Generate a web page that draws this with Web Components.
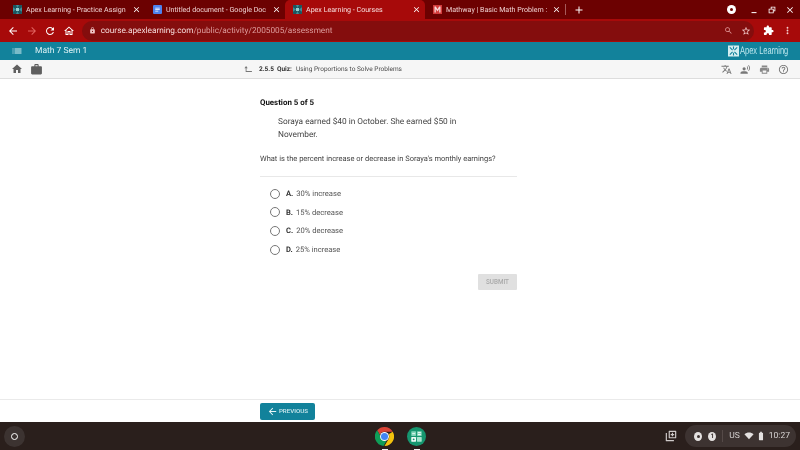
<!DOCTYPE html>
<html>
<head>
<meta charset="utf-8">
<title>Apex Learning - Courses</title>
<style>
  html, body { margin: 0; height: 100%; overflow: hidden; background: #fff; }
  body { font-family: Roboto, "Liberation Sans", sans-serif; display: flex; flex-direction: column; height: 450px; text-rendering: geometricPrecision; filter: blur(.45px); }
</style>
</head>
<body>
<browser-tabs>
  <browser-tab kind="apex" title="Apex Learning - Practice Assign"></browser-tab>
  <browser-tab kind="docs" title="Untitled document - Google Doc"></browser-tab>
  <browser-tab kind="apex" title="Apex Learning - Courses" active></browser-tab>
  <browser-tab kind="mathway" title="Mathway | Basic Math Problem :"></browser-tab>
</browser-tabs>
<browser-toolbar></browser-toolbar>
<app-header></app-header>
<app-subnav></app-subnav>
<quiz-page>
  <answer-choice letter="A." text="30% increase"></answer-choice>
  <answer-choice letter="B." text="15% decrease"></answer-choice>
  <answer-choice letter="C." text="20% decrease"></answer-choice>
  <answer-choice letter="D." text="25% increase"></answer-choice>
</quiz-page>
<app-footer></app-footer>
<os-shelf></os-shelf>

<script>
const ICONS = {
  back: 'M20 11H7.83l5.59-5.59L12 4l-8 8 8 8 1.41-1.41L7.83 13H20v-2z',
  forward: 'M12 4l-1.41 1.41L16.17 11H4v2h12.17l-5.58 5.59L12 20l8-8z',
  refresh: 'M17.65 6.35C16.2 4.9 14.21 4 12 4c-4.42 0-7.99 3.58-7.99 8s3.57 8 7.99 8c3.73 0 6.84-2.55 7.73-6h-2.08c-.82 2.33-3.04 4-5.65 4-3.31 0-6-2.69-6-6s2.69-6 6-6c1.66 0 3.14.69 4.22 1.78L13 11h7V4l-2.35 2.35z',
  homeo: 'M12 5.69l5 4.5V18h-2v-6H9v6H7v-7.81l5-4.5M12 3L2 12h3v8h6v-6h2v6h6v-8h3L12 3z',
  home: 'M10 20v-6h4v6h5v-8h3L12 3 2 12h3v8z',
  work: 'M20 6h-4V4c0-1.11-.89-2-2-2h-4c-1.11 0-2 .89-2 2v2H4c-1.11 0-1.99.89-1.99 2L2 19c0 1.11.89 2 2 2h16c1.11 0 2-.89 2-2V8c0-1.11-.89-2-2-2zm-6 0h-4V4h4v2z',
  print: 'M19 8H5c-1.66 0-3 1.34-3 3v6h4v4h12v-4h4v-6c0-1.66-1.34-3-3-3zm-3 11H8v-5h8v5zm3-7c-.55 0-1-.45-1-1s.45-1 1-1 1 .45 1 1-.45 1-1 1zm-1-9H6v4h12V3z',
  help: 'M11 18h2v-2h-2v2zm1-16C6.48 2 2 6.48 2 12s4.48 10 10 10 10-4.48 10-10S17.52 2 12 2zm0 18c-4.41 0-8-3.59-8-8s3.59-8 8-8 8 3.59 8 8-3.59 8-8 8zm0-14c-2.21 0-4 1.79-4 4h2c0-1.1.9-2 2-2s2 .9 2 2c0 2-3 1.75-3 5h2c0-2.25 3-2.5 3-5 0-2.21-1.79-4-4-4z',
  translate: 'M12.87 15.07l-2.54-2.51.03-.03c1.74-1.94 2.98-4.17 3.71-6.53H17V4h-7V2H8v2H1v1.99h11.17C11.5 7.92 10.44 9.75 9 11.35 8.07 10.32 7.3 9.19 6.69 8h-2c.73 1.63 1.73 3.17 2.98 4.56l-5.09 5.02L4 19l5-5 3.11 3.11.76-2.04zM18.5 10h-2L12 22h2l1.12-3h4.75L21 22h2l-4.5-12zm-2.62 7l1.62-4.33L19.12 17h-3.24z',
  extension: 'M20.5 11H19V7c0-1.1-.9-2-2-2h-4V3.5C13 2.12 11.88 1 10.5 1S8 2.12 8 3.5V5H4c-1.1 0-1.99.9-1.99 2v3.8H3.5c1.49 0 2.7 1.21 2.7 2.7s-1.21 2.7-2.7 2.7H2V20c0 1.1.9 2 2 2h3.8v-1.5c0-1.49 1.21-2.7 2.7-2.7 1.49 0 2.7 1.21 2.7 2.7V22H17c1.1 0 2-.9 2-2v-4h1.5c1.38 0 2.5-1.12 2.5-2.5S21.88 11 20.5 11z',
  lock: 'M18 8h-1V6c0-2.76-2.24-5-5-5S7 3.24 7 6v2H6c-1.1 0-2 .9-2 2v10c0 1.1.9 2 2 2h12c1.1 0 2-.9 2-2V10c0-1.1-.9-2-2-2zm-6 9c-1.1 0-2-.9-2-2s.9-2 2-2 2 .9 2 2-.9 2-2 2zm3.1-9H8.9V6c0-1.71 1.39-3.1 3.1-3.1 1.71 0 3.1 1.39 3.1 3.1v2z',
  star: 'M22 9.24l-7.19-.62L12 2 9.19 8.63 2 9.24l5.46 4.73L5.82 21 12 17.27 18.18 21l-1.63-7.03L22 9.24zM12 15.4l-3.76 2.27 1-4.28-3.32-2.88 4.38-.38L12 6.1l1.71 4.04 4.38.38-3.32 2.88 1 4.28L12 15.4z',
  search: 'M15.5 14h-.79l-.28-.27C15.41 12.59 16 11.11 16 9.5 16 5.91 13.09 3 9.5 3S3 5.91 3 9.5 5.91 16 9.5 16c1.61 0 3.09-.59 4.23-1.57l.27.28v.79l5 4.99L20.49 19l-4.99-5zm-6 0C7.01 14 5 11.99 5 9.5S7.01 5 9.5 5 14 7.01 14 9.5 11.99 14 9.5 14z',
  list: 'M3 13h2v-2H3v2zm0 4h2v-2H3v2zm0-8h2V7H3v2zm4 4h14v-2H7v2zm0 4h14v-2H7v2zM7 7v2h14V7H7z',
  close: 'M19 6.41L17.59 5 12 10.59 6.41 5 5 6.41 10.59 12 5 17.59 6.41 19 12 13.41 17.59 19 19 17.59 13.41 12z',
  plus: 'M19 13h-6v6h-2v-6H5v-2h6V5h2v6h6v2z',
  dots: 'M12 8a2 2 0 1 0 0-4 2 2 0 0 0 0 4zm0 2a2 2 0 1 0 0 4 2 2 0 0 0 0-4zm0 6a2 2 0 1 0 0 4 2 2 0 0 0 0-4z',
  upback: 'M5 5L1 10h3v9h15v-2H6v-7h3z',
  voice: 'M9 7a3.500 3.500 0 1 1 0 7 3.500 3.500 0 0 1 0-7zM1 21v-1.500C1 17 6 16 9 16s8 1 8 3.500V21zM16 5l-1.200 1.200c1.300 1.500 1.300 3.600 0 5.100L16 12.500c2-2 2-5.500 0-7.500zM19 2l-1.200 1.200c2.900 3 2.900 8.100 0 11.100L19 15.500c3.800-3.700 3.800-9.800 0-13.500z',
  wifi: 'M12 20L1 7.500C4 5 8 3.500 12 3.500s8 1.500 11 4z',
  battery: 'M15.700 4H14V2h-4v2H8.300C7.600 4 7 4.600 7 5.300v15.300C7 21.400 7.600 22 8.300 22h7.300c.8 0 1.300-.6 1.300-1.300V5.300C17 4.600 16.400 4 15.700 4z',
  minimize: 'M6 17h12v2.500H6z',
  restore: 'M9 4h11v11h-4v5H4V9h5zm2 5h5v4h2V6h-7zM6 11v7h8v-7z',
  shelfadd: 'M9 3h11a1 1 0 0 1 1 1v11a1 1 0 0 1-1 1H9a1 1 0 0 1-1-1V4a1 1 0 0 1 1-1zm1 2v9h9V5zm3.500 1.500h2v2h2v2h-2v2h-2v-2h-2v-2h2zM3 7h2v12h12v2H4a1 1 0 0 1-1-1z'
};

class UiIcon extends HTMLElement {
  connectedCallback() {
    const size = this.getAttribute('size') || 12;
    const color = this.getAttribute('color') || 'currentColor';
    this.attachShadow({mode: 'open'}).innerHTML = `
      <style>:host{display:inline-flex;flex:none;width:${size}px;height:${size}px} svg{display:block;width:100%;height:100%}</style>
      <svg viewBox="0 0 24 24" fill="${color}"><path d="${ICONS[this.getAttribute('name')]}"/></svg>`;
  }
}
customElements.define('ui-icon', UiIcon);

const FAVICONS = {
  apex: `<rect width="12" height="12" fill="#3d8f9a"/><path d="M0 0h4l2 4 2-4h4v3L8 6l4 3v3H8L6 8l-2 4H0V9l4-3-4-3z" fill="#1d5660"/><rect x="4" y="4" width="4" height="4" fill="#9accce"/>`,
  docs: `<rect width="12" height="12" rx="1.500" fill="#4e82ee"/><path d="M3 3.500h6v1H3zM3 5.500h6v1H3zM3 7.500h4v1H3z" fill="#fff"/>`,
  mathway: `<rect width="12" height="12" fill="#d23b3b"/><path d="M2 10V2h1.800L6 5.500 8.200 2H10v8H8.300V5.200L6 8.500 3.700 5.200V10z" fill="#f7d9d9"/>`
};

class BrowserTab extends HTMLElement {
  constructor() {
    super();
    this.attachShadow({mode: 'open'});
  }
  connectedCallback() {
    this.shadowRoot.innerHTML = `
      <style>
        :host { display: flex; align-items: center; width: 140px; height: 19px; box-sizing: border-box; padding: 0 4px 0 8px; color: #f0d2d2; font-size: 7.100px; }
        :host([active]) { background: #a70a0a; border-radius: 5px 5px 0 0; color: #f8dede; }
        svg { width: 9px; height: 9px; flex: none; }
        .title { flex: 1; margin-left: 4px; white-space: nowrap; overflow: hidden; }
        ui-icon { margin-left: 2px; color: #fff; }
      </style>
      <svg viewBox="0 0 12 12">${FAVICONS[this.getAttribute('kind')]}</svg>
      <span class="title">${this.getAttribute('title')}</span>
      <ui-icon name="close" size="9"></ui-icon>`;
  }
}
customElements.define('browser-tab', BrowserTab);

customElements.define('browser-tabs', class extends HTMLElement {
  constructor() {
    super();
    this.attachShadow({mode: 'open'}).innerHTML = `
      <style>
        :host { display: flex; align-items: center; height: 19px; background: #6c0101; color: #fff; flex: none; padding-left: 5px; }
        .sep { width: 1px; height: 11px; background: #a65a5a; }
        .plus { margin-left: 7px; }
        .win { margin-left: auto; display: flex; align-items: center; gap: 8px; padding-right: 5px; }
        .profile { width: 9px; height: 9px; border-radius: 50%; background: #fff; display: flex; align-items: center; justify-content: center; margin-right: 5px; }
        .profile i { width: 3px; height: 3px; border-radius: 50%; background: #6c0101; }
      </style>
      <slot></slot>
      <span class="sep"></span>
      <ui-icon class="plus" name="plus" size="12"></ui-icon>
      <div class="win">
        <span class="profile"><i></i></span>
        <ui-icon name="minimize" size="10"></ui-icon>
        <ui-icon name="restore" size="10"></ui-icon>
        <ui-icon name="close" size="10"></ui-icon>
      </div>`;
  }
});

customElements.define('browser-toolbar', class extends HTMLElement {
  constructor() {
    super();
    this.attachShadow({mode: 'open'}).innerHTML = `
      <style>
        :host { display: flex; align-items: center; height: 23px; background: #a70a0a; color: #fff; flex: none; padding-left: 7px; box-sizing: border-box; }
        .nav { display: flex; gap: 6.600px; align-items: center; }
        .omni { flex: 1; height: 20px; margin-left: 7px; background: #840d0d; border-radius: 10px; display: flex; align-items: center; padding: 0 3px 0 7px; font-size: 8.250px; color: #dd9c9c; white-space: nowrap; }
        .omni b { font-weight: 400; color: #f6dcdc; }
        .omni > span:first-of-type { margin-left: 5px; }
        .omni .right { margin-left: auto; display: flex; gap: 8px; align-items: center; }
        .tail { display: flex; align-items: center; gap: 8px; padding: 0 7px 0 9px; }
      </style>
      <div class="nav">
        <ui-icon name="back" size="12"></ui-icon>
        <ui-icon name="forward" size="12" color="#e0625f"></ui-icon>
        <ui-icon name="refresh" size="12"></ui-icon>
        <ui-icon name="homeo" size="12"></ui-icon>
      </div>
      <div class="omni">
        <ui-icon name="lock" size="7" color="#f0c8c8"></ui-icon>
        <span><b>course.apexlearning.com</b>/public/activity/2005005/assessment</span>
        <span class="right">
          <ui-icon name="search" size="9" color="#e39a9a"></ui-icon>
          <ui-icon name="star" size="10" color="#f5d0d0"></ui-icon>
        </span>
      </div>
      <div class="tail">
        <ui-icon name="extension" size="11"></ui-icon>
        <ui-icon name="dots" size="11" color="#f5d0d0"></ui-icon>
      </div>`;
  }
});

customElements.define('app-header', class extends HTMLElement {
  constructor() {
    super();
    this.attachShadow({mode: 'open'}).innerHTML = `
      <style>
        :host { display: flex; align-items: center; height: 18px; background: #12829b; color: #dff3f5; flex: none; padding: 0 12px 0 11px; box-sizing: border-box; font-size: 8.500px; }
        .name { margin-left: 12px; }
        .logo { margin-left: auto; display: flex; align-items: center; gap: 1px; font: 11px "Liberation Sans", sans-serif; color: #bfe8ee; }
        .logo span { display: inline-block; width: 48px; white-space: nowrap; }
        .logo span i { display: inline-block; font-style: normal; transform: scaleX(.68); transform-origin: left center; }
        svg { width: 11px; height: 12px; }
      </style>
      <ui-icon name="list" size="12"></ui-icon>
      <span class="name">Math 7 Sem 1</span>
      <div class="logo">
        <svg viewBox="0 0 12 12"><rect width="12" height="12" fill="#d5eef0"/><path d="M2 2l3 3M10 2L7 5M2 10l3-3M10 10L7 7M6 1v3M6 8v3" stroke="#12829b" stroke-width="1.200"/></svg>
        <span><i>Apex Learning</i></span>
      </div>`;
  }
});

customElements.define('app-subnav', class extends HTMLElement {
  constructor() {
    super();
    this.attachShadow({mode: 'open'}).innerHTML = `
      <style>
        :host { display: flex; align-items: center; height: 19px; background: #f6f6f6; border-bottom: 1px solid #ddd; box-sizing: border-box; color: #5f5f5f; flex: none; font-size: 6.500px; padding: 0 11px; }
        .left { display: flex; gap: 7px; width: 233px; }
        .crumb { display: flex; align-items: center; color: #4a4a4a; }
        .crumb b { margin-left: 5px; color: #333; }
        .crumb span { margin-left: 4px; white-space: nowrap; }
        .tools { margin-left: auto; display: flex; gap: 8px; align-items: center; }
      </style>
      <div class="left">
        <ui-icon name="home" size="12"></ui-icon>
        <ui-icon name="work" size="13"></ui-icon>
      </div>
      <div class="crumb">
        <ui-icon name="upback" size="10" color="#777"></ui-icon>
        <b>2.5.5</b><b style="margin-left:3px">Quiz:</b>
        <span>Using Proportions to Solve Problems</span>
      </div>
      <div class="tools">
        <ui-icon name="translate" size="11" color="#777"></ui-icon>
        <ui-icon name="voice" size="11" color="#777"></ui-icon>
        <ui-icon name="print" size="11" color="#888"></ui-icon>
        <ui-icon name="help" size="11" color="#777"></ui-icon>
      </div>`;
  }
});

customElements.define('quiz-page', class extends HTMLElement {
  constructor() {
    super();
    this.attachShadow({mode: 'open'}).innerHTML = `
      <style>
        :host { display: block; flex: 1; background: #fff; padding: 19px 283px 0 260px; color: #444; }
        h2 { margin: 0; font-size: 7.900px; line-height: 10px; color: #111; font-weight: 700; }
        .stem { margin: 8px 0 0 18px; font-size: 8.300px; line-height: 13px; color: #444; width: 190px; }
        .ask { margin: 11px 0 0; font-size: 7.500px; line-height: 11px; white-space: nowrap; color: #444; }
        hr { border: 0; border-top: 1px solid #e8e8e8; margin: 12px 0 0; }
        .choices { margin-top: 7.500px; }
        .actions { display: flex; justify-content: flex-end; margin-top: 15.500px; }
        button { width: 39px; height: 16px; padding: 0; border: 0; border-radius: 1px; background: #e0e0e0; color: #a9a9a9; font: 500 6.300px Roboto, sans-serif; }
      </style>
      <h2>Question 5 of 5</h2>
      <p class="stem">Soraya earned $40 in October. She earned $50 in November.</p>
      <p class="ask">What is the percent increase or decrease in Soraya's monthly earnings?</p>
      <hr>
      <div class="choices"><slot></slot></div>
      <div class="actions"><button>SUBMIT</button></div>`;
  }
});

class AnswerChoice extends HTMLElement {
  connectedCallback() {
    this.attachShadow({mode: 'open'}).innerHTML = `
      <style>
        :host { display: flex; align-items: center; height: 18.600px; padding-left: 10px; font-size: 7.600px; color: #555; }
        .radio { width: 10px; height: 10px; box-sizing: border-box; border: 1px solid #777; border-radius: 50%; flex: none; }
        b { margin-left: 6px; color: #333; }
        span { margin-left: 3px; }
      </style>
      <i class="radio"></i><b>${this.getAttribute('letter')}</b><span>${this.getAttribute('text')}</span>`;
  }
}
customElements.define('answer-choice', AnswerChoice);

customElements.define('app-footer', class extends HTMLElement {
  constructor() {
    super();
    this.attachShadow({mode: 'open'}).innerHTML = `
      <style>
        :host { display: flex; align-items: center; height: 23px; border-top: 1px solid #eaeaea; box-sizing: border-box; padding: 0 0 0 260px; background: #fff; flex: none; }
        button { display: flex; align-items: center; justify-content: center; gap: 1px; width: 55px; height: 17px; padding: 0; border: 0; border-radius: 2px; background: #12829b; color: #cfe9ee; font: 500 6.200px Roboto, sans-serif; }
      </style>
      <button><ui-icon name="back" size="11" color="#e6f5f7"></ui-icon>PREVIOUS</button>`;
  }
});

customElements.define('os-shelf', class extends HTMLElement {
  constructor() {
    super();
    this.attachShadow({mode: 'open'}).innerHTML = `
      <style>
        :host { display: flex; align-items: center; height: 28px; background: #2a1f1c; color: #d8d4d3; flex: none; padding: 0 4px; box-sizing: border-box; font-size: 8.500px; }
        .launcher { width: 21px; height: 21px; border-radius: 50%; background: #3c3331; display: flex; align-items: center; justify-content: center; }
        .launcher i { width: 5px; height: 5px; border: 1.300px solid #fff; border-radius: 50%; }
        .apps { display: flex; gap: 13px; margin-left: 350px; }
        .apps div { position: relative; width: 19px; height: 19px; }
        .apps div::after { content: ""; position: absolute; left: 7px; bottom: -4px; width: 6px; height: 1px; background: #eee; }
        .apps svg { display: block; width: 19px; height: 19px; }
        .overview { margin-left: auto; margin-right: 7px; }
        .tray { width: 111px; height: 22px; background: #3d3331; border-radius: 11px; display: flex; align-items: center; padding: 0 6px 0 9px; box-sizing: border-box; }
        .dot { width: 9px; height: 9px; border-radius: 50%; background: #e4e1e0; display: flex; align-items: center; justify-content: center; color: #3d3331; font-size: 6.500px; font-weight: 700; }
        .dot i { width: 3px; height: 3px; border-radius: 50%; background: #3d3331; }
        .sep { width: 1px; height: 12px; background: #554a48; margin: 0 6px; }
        .time { margin-left: 3px; white-space: nowrap; }
      </style>
      <div class="launcher"><i></i></div>
      <div class="apps">
        <div><svg viewBox="0 0 20 20">
          <path d="M10 0a10 10 0 0 1 8.700 5H10a5 5 0 0 0-4.800 3.500L2.300 3.500A10 10 0 0 1 10 0z" fill="#db4437"/>
          <path d="M18.700 5A10 10 0 0 1 10 20l4.300-7.500A5 5 0 0 0 14.300 7.500z" fill="#f4c20d"/>
          <path d="M2.300 3.500L6.600 11A5 5 0 0 0 12 14.700L9 20A10 10 0 0 1 2.300 3.500z" fill="#0f9d58"/>
          <circle cx="10" cy="10" r="4.700" fill="#fff"/><circle cx="10" cy="10" r="3.700" fill="#4285f4"/>
        </svg></div>
        <div><svg viewBox="0 0 20 20">
          <circle cx="10" cy="10" r="10" fill="#16966f"/>
          <rect x="4.500" y="4.500" width="5" height="5" rx=".5" fill="#7fd4b8"/>
          <rect x="5.500" y="6.500" width="3" height="1" fill="#eafaf4"/>
          <rect x="10.500" y="4.500" width="5" height="5" rx=".5" fill="#7fd4b8"/>
          <rect x="11.500" y="5.500" width="3" height="1" fill="#fff"/>
          <rect x="11.500" y="7.500" width="3" height="1" fill="#fff"/>
          <rect x="4.500" y="10.500" width="5" height="5" rx=".5" fill="#f2fbf8"/>
          <circle cx="7" cy="13" r="1" fill="#16966f"/>
          <rect x="10.500" y="10.500" width="5" height="5" rx=".5" fill="#a8e5d0"/>
        </svg></div>
      </div>
      <ui-icon class="overview" name="shelfadd" size="14" color="#cfcac9"></ui-icon>
      <div class="tray">
        <span class="dot"><i></i></span>
        <span class="dot" style="margin-left:6px">1</span>
        <span class="sep"></span>
        <span>US</span>
        <ui-icon name="wifi" size="10" color="#e4e1e0" style="margin-left:4px"></ui-icon>
        <ui-icon name="battery" size="10" color="#e4e1e0" style="margin-left:2px"></ui-icon>
        <span class="time">10:27</span>
      </div>`;
  }
});
</script>
</body>
</html>
